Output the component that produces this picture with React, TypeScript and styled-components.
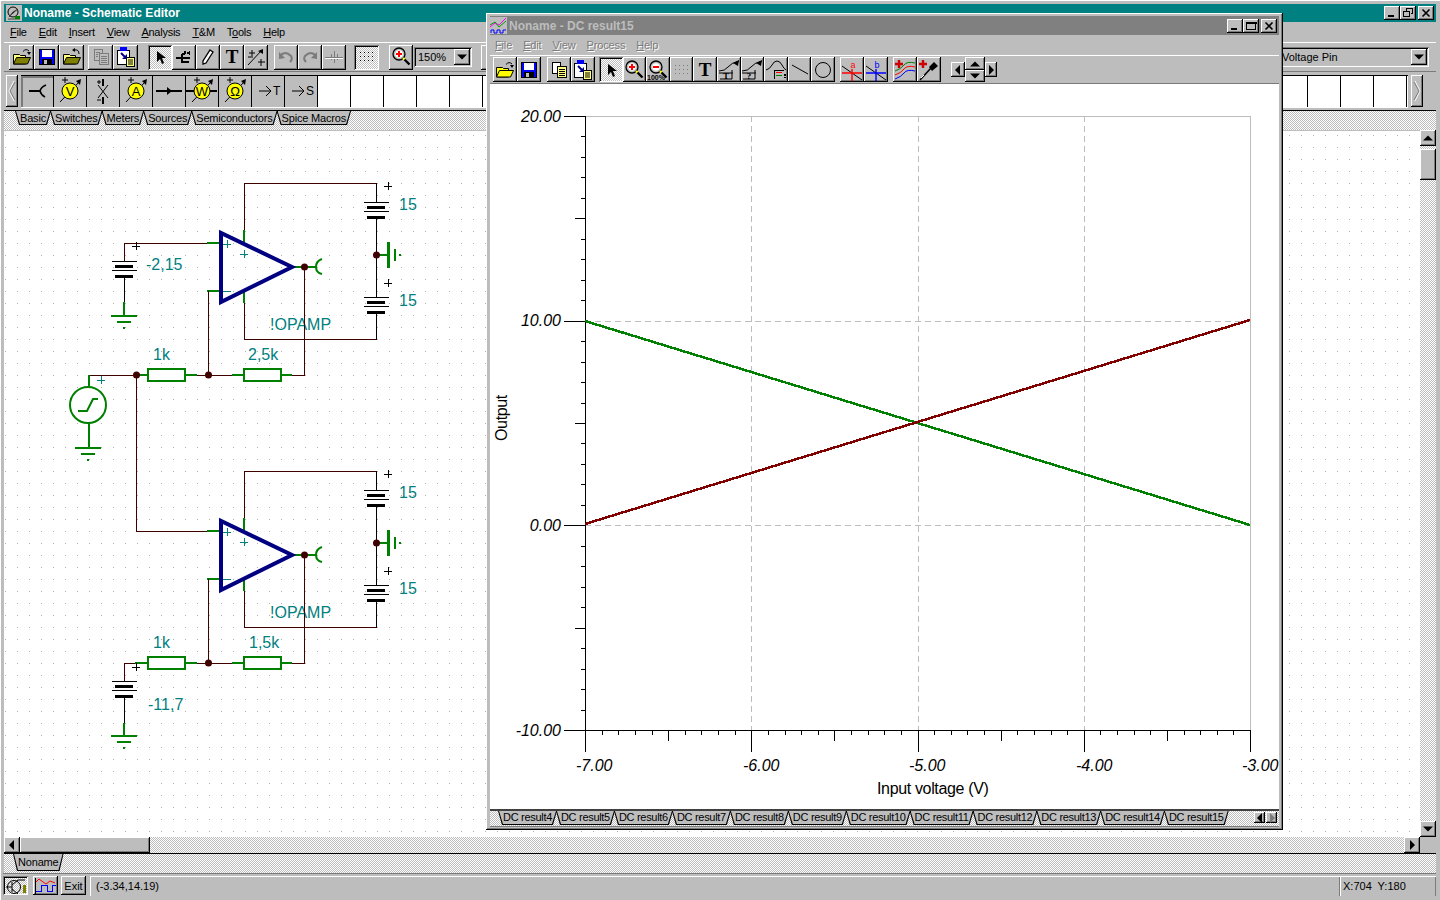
import React from 'react';
import styled, { createGlobalStyle, css } from 'styled-components';

const GRAY = '#bdbdbd';
const DARK = '#7b7b7b';
const TEAL = '#008080';
const WIRE = '#3f0000';
const PIN = '#008000';

const GlobalStyle = createGlobalStyle`
  html, body {
    margin: 0;
    padding: 0;
    overflow: hidden;
    background: ${GRAY};
  }
  * { box-sizing: border-box; }
`;

const raised = css`
  background-color: ${GRAY};
  box-shadow: inset -1px -1px 0 #000, inset 1px 1px 0 #fff, inset -2px -2px 0 ${DARK};
`;

const sunken = css`
  box-shadow: inset 1px 1px 0 ${DARK}, inset -1px -1px 0 #fff, inset 2px 2px 0 #000;
`;

const dither = css`
  background-color: #fff;
  background-image: repeating-conic-gradient(${GRAY} 0 25%, #fff 0 50%);
  background-size: 2px 2px;
`;

const Frame = styled.div`
  position: relative;
  display: flex;
  flex-direction: column;
  width: 1440px;
  height: 900px;
  padding: 4px;
  background: ${GRAY};
  box-shadow: inset 1px 1px 0 #fff;
  font: 11px 'Liberation Sans', Arial, sans-serif;
  color: #000;
  user-select: none;
`;

const TitleBar = styled.div<{ $inactive?: boolean }>`
  display: flex;
  align-items: center;
  flex: none;
  height: ${p => (p.$inactive ? 19 : 18)}px;
  padding: 0 2px 0 ${p => (p.$inactive ? 0 : 2)}px;
  background: ${p => (p.$inactive ? '#808080' : TEAL)};
  color: ${p => (p.$inactive ? GRAY : '#fff')};
  font-weight: bold;
  font-size: 12px;
`;

const TitleText = styled.span`
  margin-left: 2px;
  flex: 1;
`;

const CaptionButton = styled.button<{ $gap?: boolean }>`
  ${raised}
  width: 16px;
  height: 14px;
  padding: 0;
  border: 0;
  margin-left: ${p => (p.$gap ? 2 : 0)}px;
  display: flex;
  align-items: center;
  justify-content: center;
`;

const MenuBar = styled.div<{ $disabled?: boolean }>`
  display: flex;
  align-items: center;
  flex: none;
  height: 19px;
  margin-top: 1px;
  padding-bottom: 2px;
  gap: 12px;
  padding-left: ${p => (p.$disabled ? 5 : 6)}px;
  letter-spacing: -0.25px;
  ${p => p.$disabled && css`
    color: ${DARK};
    text-shadow: 1px 1px 0 #fff;
    letter-spacing: -0.15px;
    gap: 11px;
  `}
`;

const ToolRow = styled.div`
  display: flex;
  align-items: center;
  flex: none;
  height: 30px;
  padding-left: 5px;
  border-top: 1px solid #fff;
  border-bottom: 1px solid ${DARK};
`;

const Group = styled.div<{ $after: number }>`
  display: flex;
  flex: none;
  margin-right: ${p => p.$after}px;
`;

const ToolButton = styled.button<{ $w?: number; $on?: boolean }>`
  width: ${p => p.$w ?? 24}px;
  height: 25px;
  flex: none;
  padding: 0;
  border: 0;
  display: flex;
  align-items: center;
  justify-content: center;
  ${raised}
  ${p => p.$on && css`
    ${dither}
    ${sunken}
  `}
`;

const HiddenToolButton = styled(ToolButton)`
  margin-left: 9px;
`;

const Combo = styled.div<{ $w: number }>`
  ${sunken}
  display: flex;
  align-items: center;
  justify-content: space-between;
  flex: none;
  width: ${p => p.$w}px;
  height: 20px;
  padding: 0 2px 0 4px;
  font-size: 11px;
`;

const ComboArrow = styled.span`
  ${raised}
  display: flex;
  align-items: center;
  justify-content: center;
  width: 16px;
  height: 16px;
`;

const VoltageCombo = styled(Combo)`
  margin-left: auto;
  margin-right: 7px;
  padding-left: 13px;
`;

const PaletteRow = styled.div`
  display: flex;
  align-items: center;
  flex: none;
  height: 38px;
  padding-left: 2px;
  gap: 3px;
`;

const Grip = styled.button`
  ${raised}
  flex: none;
  width: 12px;
  height: 32px;
  padding: 0;
  border: 0;
  display: flex;
  align-items: center;
  justify-content: center;
`;

const Cells = styled.div`
  display: flex;
  flex: none;
  width: 1387px;
  height: 33px;
  overflow: hidden;
  background: #fff;
  border-top: 1px solid #000;
  border-bottom: 1px solid #fff;
`;

const Cell = styled.div<{ $filled?: boolean; $first?: boolean }>`
  flex: none;
  width: 33px;
  height: 31px;
  border-right: 1px solid #000;
  background: ${p => (p.$filled ? GRAY : '#fff')};
  display: flex;
  align-items: center;
  justify-content: center;
  ${p => p.$first && css`box-shadow: inset 2px 2px 0 ${DARK};`}
`;

const TabStrip = styled.div<{ $h: number; $pad: number }>`
  ${dither}
  display: flex;
  align-items: flex-start;
  flex: none;
  height: ${p => p.$h}px;
  padding-left: ${p => p.$pad}px;
  border-top: 1px solid #000;
`;

const Tab = styled.span<{ $on?: boolean; $tall?: boolean }>`
  position: relative;
  display: block;
  flex: none;
  height: ${p => (p.$tall ? 17 : 14)}px;
  padding: 0 5px 0 5px;
  margin-right: -1px;
  line-height: ${p => (p.$tall ? 17 : 15)}px;
  letter-spacing: -0.18px;
  z-index: ${p => (p.$on ? 2 : 1)};

  &::before, &::after {
    content: '';
    position: absolute;
    inset: 0;
    clip-path: polygon(0 0, 100% 0, calc(100% - 4px) 100%, 4px 100%);
  }
  &::before { background: #000; }
  &::after {
    inset: 0 1px 1px 1px;
    background: ${GRAY};
  }
`;

const ResultTab = styled(Tab)`
  letter-spacing: -0.3px;
  line-height: 12px;
`;

const TabLabel = styled.span`
  position: relative;
  z-index: 1;
`;

const Workspace = styled.div`
  display: flex;
  flex: 1;
  min-height: 0;
`;

const CanvasColumn = styled.div`
  display: flex;
  flex-direction: column;
  flex: 1;
  min-width: 0;
`;

const Canvas = styled.div`
  flex: 1;
  min-height: 0;
  overflow: hidden;
  background-color: #fff;
  background-image: conic-gradient(from 270deg at 1px 1px, #b0b0b0 25%, transparent 0);
  background-size: 12px 12px;
  background-position: 1px 5px;
  box-shadow: inset 0 1px 0 ${GRAY};

  svg { display: block; }
`;

const HScroll = styled.div`
  ${dither}
  display: flex;
  flex: none;
  height: 16px;
`;

const ScrollButton = styled.button`
  ${raised}
  flex: none;
  width: 16px;
  height: 16px;
  padding: 0;
  border: 0;
  display: flex;
  align-items: center;
  justify-content: center;
`;

const HThumb = styled.div`
  ${raised}
  width: 130px;
  height: 16px;
  margin-right: auto;
`;

const VScroll = styled.div`
  display: flex;
  flex-direction: column;
  flex: none;
  width: 16px;
`;

const VTrack = styled.div`
  ${dither}
  flex: 1;
  padding-top: 3px;
`;

const VThumb = styled.div`
  ${raised}
  width: 16px;
  height: 31px;
`;

const Corner = styled.div`
  flex: none;
  height: 16px;
  background: ${GRAY};
`;

const StatusBar = styled.div`
  display: flex;
  align-items: flex-start;
  flex: none;
  height: 23px;
  margin-left: -1px;
  border-top: 1px solid ${DARK};
  padding-top: 2px;
`;

const StatusIcon = styled.button<{ $on?: boolean; $after: number }>`
  ${raised}
  flex: none;
  width: 25px;
  height: 19px;
  padding: 0;
  border: 0;
  margin-right: ${p => p.$after}px;
  font: inherit;
  font-size: 11px;
  display: flex;
  align-items: center;
  justify-content: center;
  ${p => p.$on && css`
    ${dither}
    ${sunken}
  `}
`;

const StatusField = styled.div<{ $w?: number }>`
  display: flex;
  align-items: center;
  height: 20px;
  padding-left: 6px;
  font-size: 11px;
  box-shadow: inset 1px 1px 0 #fff, inset -1px 0 0 ${DARK};
  ${p => (p.$w ? css`width: ${p.$w}px; flex: none; padding-left: 3px; word-spacing: 3px;` : css`flex: 1;`)}
`;

const ChildWindow = styled.section`
  position: absolute;
  left: 486px;
  top: 13px;
  width: 797px;
  height: 817px;
  display: flex;
  flex-direction: column;
  padding: 3px 4px 3px 4px;
  background: ${GRAY};
  box-shadow: inset -1px -1px 0 #000, inset 1px 1px 0 #fff, inset -2px -2px 0 ${DARK};
`;

const ChildToolRow = styled.div`
  display: flex;
  align-items: center;
  flex: none;
  height: 29px;
  padding-left: 3px;
  border-top: 1px solid #fff;
  border-bottom: 1px solid ${DARK};
`;

const ChildToolButton = styled(ToolButton)`
  width: 23.6px;
`;

const NavPad = styled.div`
  display: flex;
  align-items: center;
  flex: none;
`;

const NavColumn = styled.div`
  display: flex;
  flex-direction: column;
`;

const NavButton = styled.button<{ $w: number; $h: number }>`
  ${raised}
  width: ${p => p.$w}px;
  height: ${p => p.$h}px;
  padding: 0;
  border: 0;
  display: flex;
  align-items: center;
  justify-content: center;
`;

const Plot = styled.div`
  flex: 1;
  min-height: 0;
  background: #fff;
  svg { display: block; }
`;

const ChildTabStrip = styled(TabStrip)`
  border-top: 2px solid #404040;
  position: relative;
  box-shadow: inset 0 -1px 0 ${DARK};
`;

const TabArrows = styled.div`
  display: flex;
  align-items: center;
  margin: 1px 2px 0 auto;
  gap: 1px;
`;

const TabArrow = styled.span`
  ${raised}
  width: 11px;
  height: 11px;
  display: flex;
  align-items: center;
  justify-content: center;
`;

/* ---------- drawings ---------- */

const Arrow = ({ dir, color = '#000' }: { dir: 'l' | 'r' | 'u' | 'd'; color?: string }) => {
  const pts = {
    l: '7,0 7,10 2,5',
    r: '3,0 3,10 8,5',
    u: '0,7.5 10,7.5 5,2.5',
    d: '0,2.5 10,2.5 5,7.5',
  }[dir];
  return (
    <svg width="10" height="10" viewBox="0 0 10 10">
      <polygon points={pts} fill={color} />
    </svg>
  );
};

const GripArrow = ({ dir }: { dir: 'l' | 'r' }) => (
  <svg width="8" height="22" viewBox="0 0 8 22">
    <polyline
      points={dir === 'l' ? '6,1 1,11 6,21' : '2,1 7,11 2,21'}
      fill="none"
      stroke="#fff"
    />
    <polyline
      points={dir === 'l' ? '7,2 2,11 7,20' : '1,2 6,11 1,20'}
      fill="none"
      stroke={DARK}
    />
  </svg>
);

const Glyph = ({ kind }: { kind: 'min' | 'max' | 'restore' | 'close' }) => (
  <svg width="12" height="10" viewBox="0 0 12 10" shapeRendering="crispEdges">
    {kind === 'min' && <rect x="2" y="7" width="6" height="2" fill="#000" />}
    {kind === 'max' && (
      <path d="M1.5 1.5h9v7h-9zM1 1h10v1H1z" fill="none" stroke="#000" />
    )}
    {kind === 'restore' && (
      <g fill="none" stroke="#000">
        <path d="M4.5 2.5V.5h6v5h-2" />
        <rect x="1.5" y="3.5" width="6" height="5" fill={GRAY} />
        <path d="M1 3h7M4 0.5h7" />
      </g>
    )}
    {kind === 'close' && (
      <g shapeRendering="auto" stroke="#000" strokeWidth="1.6">
        <path d="M2.5 1.5l7 7M9.5 1.5l-7 7" />
      </g>
    )}
  </svg>
);

const Folder = ({ bright, back }: { bright?: boolean; back?: boolean }) => (
  <svg width="20" height="20" viewBox="0 0 20 20">
    <path d="M1.5 17V7.5h6l1 1h5V17z" fill={bright ? '#ffff00' : '#ffff80'} stroke="#000" />
    <path d="M1.5 17l3-6.5h14l-3 6.5z" fill={bright ? '#ffff00' : '#808000'} stroke="#000" />
    <path
      d={back ? 'M17 7Q17 2 12 3' : 'M11 4.5Q14 1 17 4'}
      fill="none"
      stroke="#000"
    />
    <polygon points={back ? '13,1 13,5 10,3' : '15,5 19,5 17,8'} fill="#000" />
  </svg>
);

const Floppy = () => (
  <svg width="20" height="20" viewBox="0 0 20 20" shapeRendering="crispEdges">
    <rect x="2" y="2" width="16" height="16" fill="#000" />
    <rect x="3" y="3" width="14" height="14" fill="#0000ff" />
    <rect x="5" y="3" width="10" height="7" fill="#fff" />
    <rect x="5" y="12" width="10" height="5" fill="#000" />
    <rect x="7" y="13" width="3" height="4" fill={GRAY} />
  </svg>
);

const Docs = ({ off }: { off?: boolean }) => {
  const line = off ? DARK : '#000';
  return (
    <svg width="20" height="20" viewBox="0 0 20 20" shapeRendering="crispEdges">
      <rect x="3.5" y="2.5" width="8" height="11" fill={off ? GRAY : '#fff'} stroke={line} />
      <rect x="8.5" y="6.5" width="9" height="11" fill={off ? GRAY : '#ffff80'} stroke={line} />
      <path d="M10 9h6M10 11h6M10 13h6M10 15h6" stroke={line} />
      {off && <path d="M5 5h4M5 7h2M5 9h2" stroke={line} />}
    </svg>
  );
};

const Clipboard = () => (
  <svg width="22" height="22" viewBox="0 0 22 22">
    <rect x="2.5" y="4.5" width="12" height="14" fill="#fff" stroke="#000" />
    <rect x="5" y="1" width="7" height="4" fill="#0000ff" />
    <rect x="11.5" y="11.5" width="8" height="9" fill="#ffff80" stroke="#000" />
    <path d="M13 14h5M13 16h5M13 18h5" stroke="#000" />
    <path d="M6 7l5 5" stroke="#000080" strokeWidth="2" />
    <polygon points="12,8 12,13 7,13" fill="#000080" />
  </svg>
);

const Pointer = () => (
  <svg width="20" height="20" viewBox="0 0 20 20">
    <path d="M7 4v11l3-3 2 5 2-1-2-5h4z" fill="#000" />
  </svg>
);

const WireTool = () => (
  <svg width="20" height="20" viewBox="0 0 20 20" shapeRendering="crispEdges">
    <path d="M2 11h6M11 4v3M8 7h3M8 7v8h3M8 11h8M11 15h4" stroke="#000" strokeWidth="1.2" fill="none" />
    <polygon points="12,6 16,4 16,8" fill="#000" />
  </svg>
);

const Pencil = () => (
  <svg width="20" height="20" viewBox="0 0 20 20">
    <path d="M12 3l3 2-7 11-3 1 0-3z" fill="#fff" stroke="#000" strokeWidth="1.3" />
  </svg>
);

const TextTool = () => (
  <svg width="20" height="20" viewBox="0 0 20 20">
    <text
      x="10"
      y="16"
      textAnchor="middle"
      fontFamily="'Liberation Serif', serif"
      fontWeight="bold"
      fontSize="19"
      fill="#000"
    >
      T
    </text>
  </svg>
);

const ConnectTool = () => (
  <svg width="20" height="20" viewBox="0 0 20 20">
    <path d="M2 18L16 3M6 3v6M3 6h6M2 10h5M12 15h7M15 12v7" stroke="#000" fill="none" />
    <polygon points="17,2 17,7 12,4" fill="#000" />
  </svg>
);

const TurnArrow = ({ flip }: { flip?: boolean }) => (
  <svg width="20" height="20" viewBox="0 0 20 20">
    <g transform={flip ? 'translate(20 0) scale(-1 1)' : undefined}>
      <path d="M4 9Q9 3 15 9q2 3-1 6" fill="none" stroke={DARK} strokeWidth="2" />
      <polygon points="3,5 3,12 9,11" fill={DARK} />
    </g>
  </svg>
);

const CrossTool = () => (
  <svg width="20" height="20" viewBox="0 0 20 20" shapeRendering="crispEdges">
    <path d="M1 10h18M10 4v12M7 7v6M13 7v6" stroke={DARK} />
    <path d="M1 11h18" stroke="#fff" />
  </svg>
);

const Dots = ({ color = '#000' }: { color?: string }) => (
  <svg width="20" height="20" viewBox="0 0 20 20" shapeRendering="crispEdges">
    {[5, 9, 13].flatMap(y =>
      [3, 7, 11, 15].map(x => <rect key={`${x}-${y}`} x={x} y={y} width="1" height="1" fill={color} />),
    )}
  </svg>
);

const Magnifier = ({ sign = 'plus', label }: { sign?: 'plus' | 'minus'; label?: boolean }) => (
  <svg width="22" height="22" viewBox="0 0 22 22">
    <circle cx="9" cy="8" r="6" fill={GRAY} stroke="#000" strokeWidth="1.3" />
    <circle cx="9" cy="8" r="3.8" fill="#fff" />
    <path d="M13 12l2 2" stroke="#ffff00" strokeWidth="2" />
    <path d="M14.5 13.5l5 5" stroke="#000" strokeWidth="2.4" />
    <path d={sign === 'plus' ? 'M6 8h6M9 5v6' : 'M6 8h6'} stroke="#ff0000" strokeWidth="2" />
    {label && (
      <text x="0" y="21" fontFamily="'Liberation Sans', sans-serif" fontWeight="bold" fontSize="7">
        100%
      </text>
    )}
  </svg>
);

const CurveTool = ({ mark }: { mark: 'T' | '?' }) => (
  <svg width="22" height="22" viewBox="0 0 22 22">
    <path d="M1 12q6 0 9-4t11-6" fill="none" stroke="#000" />
    <polygon points="21,1 20,7 15,4" fill="#000" />
    <path d="M1 14h14M14 11v9M2 20h12" stroke="#000" fill="none" />
    <text x="8" y="20" textAnchor="middle" fontFamily="'Liberation Serif', serif" fontWeight="bold" fontSize="9">
      {mark}
    </text>
  </svg>
);

const EquationTool = () => (
  <svg width="22" height="22" viewBox="0 0 22 22" shapeRendering="crispEdges">
    <path d="M1 11q4-1 6-5t5-4 5 4 4 5" fill="none" stroke="#000" shapeRendering="auto" />
    <path d="M9 11h10M9 11v9" stroke="#000" />
    <rect x="11" y="13" width="6" height="1" fill="#ff0000" />
    <rect x="11" y="16" width="6" height="1" fill="#008000" />
    <rect x="19" y="15" width="2" height="2" fill="#000" />
    <rect x="19" y="18" width="2" height="1" fill="#000" />
  </svg>
);

const LineTool = () => (
  <svg width="20" height="20" viewBox="0 0 20 20">
    <path d="M2 5l16 9" stroke="#000" />
  </svg>
);

const CircleTool = () => (
  <svg width="20" height="20" viewBox="0 0 20 20">
    <circle cx="10" cy="10" r="7.5" fill="none" stroke="#000" />
  </svg>
);

const CursorTool = ({ letter, color }: { letter: string; color: string }) => (
  <svg width="22" height="22" viewBox="0 0 22 22">
    <path d="M1 7l20 14" stroke="#000" />
    <path d="M1 14h20M11 10v12" stroke={color} strokeWidth="1.4" />
    <text
      x="12"
      y="9"
      textAnchor="middle"
      fontFamily="'Liberation Sans', sans-serif"
      fontSize="9"
      fill={color}
    >
      {letter}
    </text>
  </svg>
);

const AddCurve = () => (
  <svg width="22" height="22" viewBox="0 0 22 22">
    <path d="M1 12q6-2 9-6t11-2" fill="none" stroke="#008000" />
    <path d="M1 16q6-2 9-6t11-2" fill="none" stroke="#ff0000" />
    <path d="M1 20q6-2 9-6t11-2" fill="none" stroke="#0000ff" />
    <path d="M1 5h8M5 1v8" stroke="#d00000" strokeWidth="2.4" />
  </svg>
);

const Dropper = () => (
  <svg width="22" height="22" viewBox="0 0 22 22">
    <path d="M1 5h8M5 1v8" stroke="#d00000" strokeWidth="2.4" />
    <path d="M2 21l11-12" stroke="#000" strokeWidth="1.6" />
    <path d="M11 8l5-5 4 4-6 5z" fill="#000" />
    <path d="M3 19l3-3" stroke="#fff" />
  </svg>
);

const MeterIcon = ({ letter, wide }: { letter: string; wide?: boolean }) => (
  <svg width="32" height="30" viewBox="0 0 32 30">
    {wide && <path d="M0 15h31" stroke="#000" strokeWidth="2" />}
    <path d="M6 26L26 5" stroke="#000" />
    <polygon points="27,3 26,9 22,5" fill="#000" />
    <circle cx="16" cy="15" r="8" fill="#ffff00" stroke="#000" />
    <path d="M8 4h6M11 1v6" stroke="#000" />
    <text
      x="16"
      y="20"
      textAnchor="middle"
      fontFamily="'Liberation Sans', sans-serif"
      fontSize="13"
    >
      {letter}
    </text>
  </svg>
);

const PinIcon = () => (
  <svg width="32" height="30" viewBox="0 0 32 30">
    <path d="M8 15h11" stroke="#000" strokeWidth="2" />
    <path d="M25 9q-5 2-6 6 1 4 5 6" fill="none" stroke="#000" strokeWidth="1.6" />
  </svg>
);

const SwitchIcon = () => (
  <svg width="32" height="30" viewBox="0 0 32 30">
    <path d="M16 3v7M16 21v7" stroke="#000" strokeWidth="2" />
    <path d="M11 9l10 13M21 9L11 22" stroke="#000" />
    <path d="M10 6h4M12 4v4M10 24h4" stroke="#000" />
  </svg>
);

const DiodeIcon = () => (
  <svg width="32" height="30" viewBox="0 0 32 30">
    <path d="M3 15h26" stroke="#000" strokeWidth="2" />
    <polygon points="14,11 14,19 19,15" fill="#000" />
  </svg>
);

const JumpIcon = ({ letter }: { letter: string }) => (
  <svg width="32" height="30" viewBox="0 0 32 30">
    <path d="M7 15h12" stroke="#000" />
    <path d="M14 10l5 5-5 5" fill="none" stroke="#000" />
    <text x="21" y="19" fontFamily="'Liberation Sans', sans-serif" fontSize="12">
      {letter}
    </text>
  </svg>
);

const TransistorIcon = () => (
  <svg width="22" height="18" viewBox="0 0 22 18">
    <circle cx="9" cy="10" r="6.5" fill="none" stroke="#000" />
    <path d="M1 10h6M7 5v10M7 8l6-5h7M7 12l6 5" stroke="#000" fill="none" />
    <rect x="18" y="8" width="3" height="8" fill="#808000" />
  </svg>
);

const WaveIcon = () => (
  <svg width="23" height="18" viewBox="0 0 23 18" shapeRendering="crispEdges">
    <path d="M1 1v16h21" stroke="#000" fill="none" />
    <path d="M2 5l3-3 4 3 3 2 4-3 5 2" stroke="#ff0000" fill="none" shapeRendering="auto" />
    <path d="M2 14h5V8h6v6h5V8h4" stroke="#0000ff" fill="none" />
  </svg>
);

/* ---------- schematic, in screen coordinates ---------- */

const NetLabel = styled.text`
  font: 16px 'Liberation Sans', Arial, sans-serif;
  fill: ${TEAL};
`;

const Sign = ({ x, y, minus, color = '#000' }: { x: number; y: number; minus?: boolean; color?: string }) => (
  <path d={minus ? `M${x - 4} ${y}h8` : `M${x - 4} ${y}h8M${x} ${y - 4}v8`} stroke={color} shapeRendering="crispEdges" />
);

const Node = ({ x, y }: { x: number; y: number }) => <circle cx={x} cy={y} r="3.5" fill={WIRE} />;

const Wire = ({ d }: { d: string }) => <path d={d} stroke={WIRE} fill="none" shapeRendering="crispEdges" />;

const Lead = ({ d, w = 2 }: { d: string; w?: number }) => (
  <path d={d} stroke={PIN} strokeWidth={w} fill="none" shapeRendering="crispEdges" />
);

const Battery = ({ x, y }: { x: number; y: number }) => (
  <g shapeRendering="crispEdges" fill="#000">
    <rect x={x - 12} y={y} width="25" height="1" />
    <rect x={x - 9} y={y + 4} width="18" height="3" />
    <rect x={x - 12} y={y + 9} width="25" height="1" />
    <rect x={x - 9} y={y + 14} width="18" height="3" />
  </g>
);

const Ground = ({ x, y }: { x: number; y: number }) => (
  <g shapeRendering="crispEdges" fill={PIN}>
    <rect x={x - 13} y={y} width="26" height="2" />
    <rect x={x - 7} y={y + 6} width="14" height="2" />
    <rect x={x - 1} y={y + 12} width="2" height="2" />
  </g>
);

const Resistor = ({ x, y }: { x: number; y: number }) => (
  <rect x={x} y={y - 6} width="37" height="12" fill="#fff" stroke={PIN} strokeWidth="2" shapeRendering="crispEdges" />
);

const OpAmpStage = ({ dy, feedback, feedbackX }: { dy: number; feedback: string; feedbackX: number }) => (
  <g transform={`translate(0 ${dy})`}>
    <Wire d="M244.5 232V183.5H376.5V202M244.5 295V339.5H376.5V312" />
    <path d="M376.5 183v19M376.5 219v36M376.5 255v43M376.5 313v27" stroke="#000" shapeRendering="crispEdges" />
    <Battery x={376} y={202} />
    <Battery x={376} y={297} />
    <Sign x={388} y={186} />
    <Sign x={388} y={283} />
    <NetLabel x="399" y="210">15</NetLabel>
    <NetLabel x="399" y="306">15</NetLabel>
    <Lead d="M378 255h10" />
    <Lead d="M388.5 242v26" w={3} />
    <Lead d="M394.5 249v12" />
    <rect x="399" y="254" width="2" height="2" fill={PIN} shapeRendering="crispEdges" />
    <Node x={376.5} y={255} />

    <Lead d="M244 230v12M244 292v11M207 243h13M207 291h13M294 267h22" />
    <path d="M322 259q-6 2-6 8t6 7" fill="none" stroke={PIN} strokeWidth="2" />
    <polygon points="221,233 221,302 292,267" fill="none" stroke="#000080" strokeWidth="4" />
    <Sign x={227} y={244} color={TEAL} />
    <Sign x={244} y={254} color={TEAL} />
    <Sign x={227} y={291} minus color={TEAL} />
    <Node x={304.5} y={267} />
    <NetLabel x="270" y="330">!OPAMP</NetLabel>

    <Wire d="M207.5 291.5H208.5V375.5M185 375.5H243M292 375.5H304.5V267" />
    <Lead d="M135 375h13M186 375h11M232 375h11M282 375h10" />
    <Resistor x={148} y={375} />
    <Resistor x={244} y={375} />
    <Node x={208.5} y={375} />
    <NetLabel x="153" y="360">1k</NetLabel>
    <NetLabel x={feedbackX} y="360">{feedback}</NetLabel>
  </g>
);

const Schematic = () => (
  <svg width="1416" height="707" viewBox="4 130 1416 707">
    <OpAmpStage dy={0} feedback="2,5k" feedbackX={248} />
    <OpAmpStage dy={288} feedback="1,5k" feedbackX={249} />

    {/* upper input battery */}
    <Wire d="M207 243.5H124.5V261" />
    <path d="M124.5 278v25" stroke="#000" shapeRendering="crispEdges" />
    <Battery x={124} y={261} />
    <Lead d="M124 302v13" />
    <Ground x={124} y={315} />
    <Sign x={136} y={246} />
    <NetLabel x="146" y="270">-2,15</NetLabel>

    {/* step source */}
    <Wire d="M88 375.5H136M136.5 375V531.5H207" />
    <Lead d="M88.5 375v12M88.5 423v24" />
    <circle cx="88" cy="405" r="18" fill="#fff" stroke={PIN} strokeWidth="2" />
    <polyline points="78,411 87,411 93,399 98,399" fill="none" stroke={PIN} strokeWidth="2" />
    <Ground x={88} y={447} />
    <Sign x={101} y={380} color={TEAL} />
    <Node x={136.5} y={375} />

    {/* lower input battery */}
    <Wire d="M135 663.5H124.5V681" />
    <path d="M124.5 698v26" stroke="#000" shapeRendering="crispEdges" />
    <Battery x={124} y={681} />
    <Lead d="M124 723v12" />
    <Ground x={124} y={735} />
    <Sign x={136} y={667} />
    <NetLabel x="148" y="710">-11,7</NetLabel>
  </svg>
);

/* ---------- result graph, in screen coordinates ---------- */

const AxisText = styled.text<{ $italic?: boolean }>`
  font: ${p => (p.$italic ? 'italic ' : '')}16px 'Liberation Sans', Arial, sans-serif;
  fill: #000;
`;

const AxisTitle = styled.text`
  font: 16px 'Liberation Sans', Arial, sans-serif;
  letter-spacing: -0.35px;
  fill: #000;
`;

const yAt = (v: number) => 116 + ((20 - v) * 614) / 30;
const xAt = (v: number) => 585 + ((v + 7) * 665) / 4;

const yTicks = Array.from({ length: 31 }, (_, i) => i - 10);
const xTicks = Array.from({ length: 41 }, (_, i) => -7 + i / 10);

const Graph = () => (
  <svg width="789" height="724" viewBox="490 84 789 724">
    <g shapeRendering="crispEdges">
      <path d="M585 116.5H1250.5V730" stroke={GRAY} fill="none" />
      {[-6, -5, -4].map(v => (
        <path key={v} d={`M${Math.round(xAt(v)) + 0.5} 116V730`} stroke={GRAY} strokeDasharray="6 4" />
      ))}
      {[10, 0].map(v => (
        <path key={v} d={`M585 ${Math.round(yAt(v)) + 0.5}H1250`} stroke={GRAY} strokeDasharray="6 4" />
      ))}
      <path d="M585.5 116V730M585 730.5H1250.5" stroke="#000" />
      {yTicks.map(v => {
        const len = v % 10 === 0 ? 21 : v % 5 === 0 ? 10 : 4;
        const y = Math.round(yAt(v)) + 0.5;
        return <path key={v} d={`M${585 - len} ${y}H585`} stroke="#000" />;
      })}
      {xTicks.map((v, i) => {
        const len = i % 10 === 0 ? 22 : i % 5 === 0 ? 11 : 5;
        const x = Math.round(xAt(v)) + 0.5;
        return <path key={i} d={`M${x} 730V${730 + len}`} stroke="#000" />;
      })}
      <polyline points="585,321 1250,525" fill="none" stroke="#008000" strokeWidth="2.5" />
      <polyline points="585,524 1250,320" fill="none" stroke="#800000" strokeWidth="2.5" />
    </g>
    <AxisText $italic x="561" y="122" textAnchor="end">20.00</AxisText>
    <AxisText $italic x="561" y="326" textAnchor="end">10.00</AxisText>
    <AxisText $italic x="561" y="531" textAnchor="end">0.00</AxisText>
    <AxisText $italic x="561" y="736" textAnchor="end">-10.00</AxisText>
    <AxisText $italic x="576" y="771">-7.00</AxisText>
    <AxisText $italic x="743" y="771">-6.00</AxisText>
    <AxisText $italic x="909" y="771">-5.00</AxisText>
    <AxisText $italic x="1076" y="771">-4.00</AxisText>
    <AxisText $italic x="1242" y="771">-3.00</AxisText>
    <AxisTitle x="877" y="794">Input voltage (V)</AxisTitle>
    <AxisTitle transform="translate(507 441) rotate(-90)">Output</AxisTitle>
  </svg>
);

/* ---------- page ---------- */

const sourceTabs = ['Basic', 'Switches', 'Meters', 'Sources', 'Semiconductors', 'Spice Macros'];
const resultTabs = Array.from({ length: 12 }, (_, i) => `DC result${i + 4}`);

const palette = [
  <PinIcon key="pin" />,
  <MeterIcon key="v" letter="V" />,
  <SwitchIcon key="sw" />,
  <MeterIcon key="a" letter="A" />,
  <DiodeIcon key="d" />,
  <MeterIcon key="w" letter="W" wide />,
  <MeterIcon key="o" letter="Ω" />,
  <JumpIcon key="t" letter="T" />,
  <JumpIcon key="s" letter="S" />,
];

const emptyCells = Array.from({ length: 33 }, (_, i) => i);

export default function App() {
  return (
    <Frame>
      <GlobalStyle />
      <TitleBar>
        <svg width="16" height="16" viewBox="0 0 16 16">
          <rect width="16" height="16" fill={GRAY} />
          <circle cx="7" cy="7" r="5" fill="none" stroke="#000" />
          <path d="M3 12l4-5 5-3M2 14h12" stroke="#404040" />
          <rect x="9" y="11" width="5" height="3" fill="#008000" />
        </svg>
        <TitleText>Noname - Schematic Editor</TitleText>
        <CaptionButton><Glyph kind="min" /></CaptionButton>
        <CaptionButton><Glyph kind="restore" /></CaptionButton>
        <CaptionButton $gap><Glyph kind="close" /></CaptionButton>
      </TitleBar>

      <MenuBar>
        <span><u>F</u>ile</span>
        <span><u>E</u>dit</span>
        <span><u>I</u>nsert</span>
        <span><u>V</u>iew</span>
        <span><u>A</u>nalysis</span>
        <span><u>T</u>&amp;M</span>
        <span>T<u>o</u>ols</span>
        <span><u>H</u>elp</span>
      </MenuBar>

      <ToolRow>
        <Group $after={4}>
          <ToolButton $w={25}><Folder /></ToolButton>
          <ToolButton $w={25}><Floppy /></ToolButton>
          <ToolButton $w={25}><Folder back /></ToolButton>
        </Group>
        <Group $after={10}>
          <ToolButton $w={25}><Docs off /></ToolButton>
          <ToolButton $w={25}><Clipboard /></ToolButton>
        </Group>
        <Group $after={6}>
          <ToolButton $on><Pointer /></ToolButton>
          <ToolButton><WireTool /></ToolButton>
          <ToolButton><Pencil /></ToolButton>
          <ToolButton><TextTool /></ToolButton>
          <ToolButton><ConnectTool /></ToolButton>
        </Group>
        <Group $after={8}>
          <ToolButton><TurnArrow /></ToolButton>
          <ToolButton><TurnArrow flip /></ToolButton>
          <ToolButton><CrossTool /></ToolButton>
        </Group>
        <Group $after={10}>
          <ToolButton $w={25} $on><Dots /></ToolButton>
        </Group>
        <Group $after={1}>
          <ToolButton><Magnifier /></ToolButton>
        </Group>
        <Combo $w={58}>
          150%
          <ComboArrow><Arrow dir="d" /></ComboArrow>
        </Combo>
        <HiddenToolButton />
        <VoltageCombo $w={160}>
          Voltage Pin
          <ComboArrow><Arrow dir="d" /></ComboArrow>
        </VoltageCombo>
      </ToolRow>

      <PaletteRow>
        <Grip><GripArrow dir="l" /></Grip>
        <Cells>
          {palette.map((icon, i) => (
            <Cell key={i} $filled $first={i === 0}>{icon}</Cell>
          ))}
          {emptyCells.map(i => <Cell key={i} />)}
        </Cells>
        <Grip><GripArrow dir="r" /></Grip>
      </PaletteRow>

      <TabStrip $h={20} $pad={11}>
        {sourceTabs.map(t => (
          <Tab key={t} $on={t === 'Meters'}><TabLabel>{t}</TabLabel></Tab>
        ))}
      </TabStrip>

      <Workspace>
        <CanvasColumn>
          <Canvas><Schematic /></Canvas>
          <HScroll>
            <ScrollButton><Arrow dir="l" /></ScrollButton>
            <HThumb />
            <ScrollButton><Arrow dir="r" /></ScrollButton>
          </HScroll>
        </CanvasColumn>
        <VScroll>
          <ScrollButton><Arrow dir="u" /></ScrollButton>
          <VTrack><VThumb /></VTrack>
          <ScrollButton><Arrow dir="d" /></ScrollButton>
          <Corner />
        </VScroll>
      </Workspace>

      <TabStrip $h={20} $pad={9}>
        <Tab $on $tall><TabLabel>Noname</TabLabel></Tab>
      </TabStrip>

      <StatusBar>
        <StatusIcon $on $after={5}><TransistorIcon /></StatusIcon>
        <StatusIcon $after={3}><WaveIcon /></StatusIcon>
        <StatusIcon $after={4}>Exit</StatusIcon>
        <StatusField>(-3.34,14.19)</StatusField>
        <StatusField $w={96}>X:704 Y:180</StatusField>
      </StatusBar>

      <ChildWindow>
        <TitleBar $inactive>
          <svg width="17" height="17" viewBox="0 0 17 17">
            <rect width="17" height="17" fill="#bdbdbd" />
            <path d="M0 10l5-4 4 2 7-7" fill="none" stroke="#ff00ff" />
            <path d="M0 8l5-3 4 5 7-6" fill="none" stroke="#00a000" />
            <path d="M1 16v-3h3v3h3v-3h3v3h3v-3h3" fill="none" stroke="#0000ff" />
          </svg>
          <TitleText>Noname - DC result15</TitleText>
          <CaptionButton><Glyph kind="min" /></CaptionButton>
          <CaptionButton><Glyph kind="max" /></CaptionButton>
          <CaptionButton $gap><Glyph kind="close" /></CaptionButton>
        </TitleBar>

        <MenuBar $disabled>
          <span><u>F</u>ile</span>
          <span><u>E</u>dit</span>
          <span><u>V</u>iew</span>
          <span><u>P</u>rocess</span>
          <span><u>H</u>elp</span>
        </MenuBar>

        <ChildToolRow>
          <Group $after={6}>
            <ToolButton><Folder bright /></ToolButton>
            <ToolButton><Floppy /></ToolButton>
          </Group>
          <Group $after={4}>
            <ToolButton><Docs /></ToolButton>
            <ToolButton><Clipboard /></ToolButton>
          </Group>
          <Group $after={5}>
            <ChildToolButton $on><Pointer /></ChildToolButton>
            <ChildToolButton><Magnifier /></ChildToolButton>
            <ChildToolButton><Magnifier sign="minus" label /></ChildToolButton>
            <ChildToolButton><Dots color="#7b7b7b" /></ChildToolButton>
            <ChildToolButton><TextTool /></ChildToolButton>
            <ChildToolButton><CurveTool mark="T" /></ChildToolButton>
            <ChildToolButton><CurveTool mark="?" /></ChildToolButton>
            <ChildToolButton><EquationTool /></ChildToolButton>
            <ChildToolButton><LineTool /></ChildToolButton>
            <ChildToolButton><CircleTool /></ChildToolButton>
          </Group>
          <Group $after={5}>
            <ToolButton><CursorTool letter="a" color="#ff0000" /></ToolButton>
            <ToolButton><CursorTool letter="b" color="#0000ff" /></ToolButton>
          </Group>
          <Group $after={10}>
            <ToolButton><AddCurve /></ToolButton>
            <ToolButton><Dropper /></ToolButton>
          </Group>
          <NavPad>
            <NavButton $w={14} $h={15}><Arrow dir="l" /></NavButton>
            <NavColumn>
              <NavButton $w={20} $h={13}><Arrow dir="u" /></NavButton>
              <NavButton $w={20} $h={12}><Arrow dir="d" /></NavButton>
            </NavColumn>
            <NavButton $w={12} $h={15}><Arrow dir="r" /></NavButton>
          </NavPad>
        </ChildToolRow>

        <Plot><Graph /></Plot>

        <ChildTabStrip $h={18} $pad={8}>
          {resultTabs.map(t => (
            <ResultTab key={t} $on={t === 'DC result15'}><TabLabel>{t}</TabLabel></ResultTab>
          ))}
          <TabArrows>
            <TabArrow><Arrow dir="l" /></TabArrow>
            <TabArrow><Arrow dir="r" color={DARK} /></TabArrow>
          </TabArrows>
        </ChildTabStrip>
      </ChildWindow>
    </Frame>
  );
}
